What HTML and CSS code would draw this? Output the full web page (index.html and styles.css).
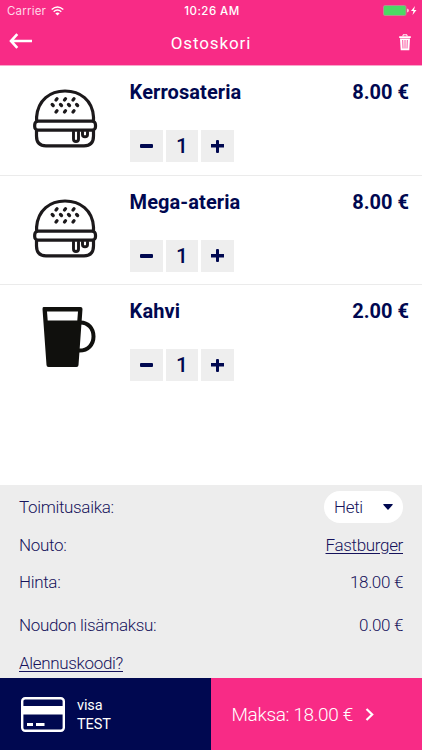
FILE: index.html
```html
<!DOCTYPE html>
<html lang="fi">
<head>
<meta charset="utf-8">
<title>Ostoskori</title>
<link rel="stylesheet" href="styles.css">
</head>
<body>
<svg class="defs" width="0" height="0" aria-hidden="true">
  <symbol id="burger" viewBox="0 0 66 60">
    <g fill="none" stroke="#1c191b" stroke-width="3.2" stroke-linecap="round" stroke-linejoin="round">
      <path d="M3.600 31V28C5 11 17 2 32 2S59.500 11 60.500 28V31"/>
      <rect x="1.700" y="32.200" width="60.800" height="9" rx="3.500"/>
      <path d="M3.500 42V47Q3.500 56.800 13 56.800H51Q60.500 56.800 60.500 47V42"/>
      <path stroke-width="2.900" d="M40.500 43V50Q40.500 52.500 43 52.500T45.500 50V43M49.500 43V45.500Q49.500 47.800 52 47.800T54.500 45.500V43"/>
    </g>
    <g stroke="#1c191b" stroke-width="3.300" stroke-linecap="round">
      <path d="M23 11l1-1.200M31.500 11l1-1.200M40 11l1-1.200M20.200 16.500l-1-1M28.500 16.500l-1-1M36.500 16.500l-1-1M44.600 16.500l-1-1M23 23l1-1.200M31.500 23l1-1.200M40 23l1-1.200"/>
    </g>
  </symbol>
</svg>
<main class="app">
  <header class="top">
    <div class="status">
      <div class="carrier">Carrier
        <svg width="13" height="10" viewBox="0 0 13 10"><g fill="none" stroke="#fff" stroke-width="1.400"><path d="M.7 3.600Q6.500-1.600 12.300 3.600M2.700 5.700Q6.500 2.300 10.300 5.700"/></g><path fill="#fff" d="M4.300 7.300Q6.500 5.500 8.700 7.300L6.500 9.500Z"/></svg>
      </div>
      <div class="time">10:26 AM</div>
      <svg class="battery" width="34" height="12" viewBox="0 0 34 12"><rect x=".5" y=".5" width="22.500" height="10" rx="1.500" fill="#4cd964" stroke="#b88c91"/><path fill="#fbc" d="M24 3.500q2 .3 2 2t-2 2z"/><path fill="#fff" d="M32 1l-4 5h2.500L29.500 10l4-5H31z"/></svg>
    </div>
    <nav class="bar">
      <svg class="back" width="24" height="16" viewBox="0 0 24 16"><path d="M8.300 1.200L2 8l6.300 6.800M2 8H23" fill="none" stroke="#fff" stroke-width="2.600"/></svg>
      <h1>Ostoskori</h1>
      <svg class="trash" width="12" height="17" viewBox="0 0 12 17"><path d="M4 2.300V.8H8V2.300" fill="none" stroke="#fff"/><path fill="#fff" d="M.2 2.200H11.800V4H.2zM1 4.500H11L10.300 16.300H1.700z"/><path d="M3.700 6l.3 8.500M6 6v8.500M8.300 6L8 14.500" stroke="#f82b86" stroke-width=".8"/></svg>
    </nav>
  </header>
  <section class="items">
    <article class="item">
      <svg class="burger" width="66" height="60"><use href="#burger"/></svg>
      <div class="details">
        <div class="line"><h2>Kerrosateria</h2><span>8.00 €</span></div>
        <div class="qty"><button class="minus"><i></i></button><b>1</b><button class="plus"><i></i></button></div>
      </div>
    </article>
    <article class="item">
      <svg class="burger" width="66" height="60"><use href="#burger"/></svg>
      <div class="details">
        <div class="line"><h2>Mega-ateria</h2><span>8.00 €</span></div>
        <div class="qty"><button class="minus"><i></i></button><b>1</b><button class="plus"><i></i></button></div>
      </div>
    </article>
    <article class="item">
      <svg class="mug" width="54" height="61" viewBox="0 0 54 61"><path fill="#10100d" fill-rule="evenodd" d="M1.500 0H38.500Q40.500 0 40.500 2L36.500 58Q36.500 60 34.500 60H6.500Q4.500 60 4.500 58L.5 2Q.5 0 1.500 0ZM5 4.500L5.700 13.500H35.300L36 4.500Z"/><path d="M37 15.500C56 14 57 45 36 43.500" fill="none" stroke="#10100d" stroke-width="4"/></svg>
      <div class="details">
        <div class="line"><h2>Kahvi</h2><span>2.00 €</span></div>
        <div class="qty"><button class="minus"><i></i></button><b>1</b><button class="plus"><i></i></button></div>
      </div>
    </article>
  </section>
  <section class="summary">
    <div class="row delivery"><span>Toimitusaika:</span><div class="select">Heti<svg width="10" height="6" viewBox="0 0 10 6"><path d="M.5 0H9.500Q10 .5 9.500 1L5.500 5.500Q5 6 4.500 5.500L.5 1Q0 .5.5 0Z" fill="#000850"/></svg></div></div>
    <div class="row pickup"><span>Nouto:</span><a>Fastburger</a></div>
    <div class="row price"><span>Hinta:</span><span>18.00 €</span></div>
    <div class="row fee"><span>Noudon lisämaksu:</span><span>0.00 €</span></div>
    <div class="row code"><a>Alennuskoodi?</a></div>
  </section>
  <footer class="actions">
    <div class="card">
      <svg width="44" height="35" viewBox="0 0 44 35"><rect x="1.200" y="1.200" width="41.600" height="32.600" rx="3" fill="none" stroke="#fff" stroke-width="2.400"/><path fill="#fff" d="M1 9H43V17.500H1zM6 26H12V29H6zM15 26H23.500V29H15z"/></svg>
      <div>visa<br>TEST</div>
    </div>
    <div class="pay"><span>Maksa: 18.00 €</span><svg width="9" height="13" viewBox="0 0 9 13"><path d="M1.500 1L7.200 6.500 1.500 12" fill="none" stroke="#fff" stroke-width="2.200"/></svg></div>
  </footer>
</main>
</body>
</html>
```
FILE: styles.css
```css
* { box-sizing: border-box; }
body { margin: 0; background: #fff; font-family: Roboto, "Liberation Sans", sans-serif; color: #000850; }
.defs { position: absolute; }
.app { width: 422px; height: 750px; display: flex; flex-direction: column; overflow: hidden; }
svg { display: block; flex: none; }

.top { height: 66px; background: #f82b86; color: #fff; border-bottom: 1px solid #f9a5ca; }
.status { height: 22px; padding: 0 5px 0 7px; display: grid; grid-template-columns: 1fr auto 1fr; align-items: center; font: 400 11.500px/22px Inter, sans-serif; }
.carrier { display: flex; align-items: center; gap: 5px; letter-spacing: .2px; color: #ffd7e8; }
.time { font-weight: 500; letter-spacing: .45px; }
.battery { justify-self: end; }
.bar { height: 43px; padding: 0 11px 0 9px; display: grid; grid-template-columns: 1fr auto 1fr; align-items: center; }
.bar h1 { margin: 0 -1px 0 1px; font-size: 17px; font-weight: 400; line-height: 43px; letter-spacing: .9px; }
.back { margin-top: -5px; }
.trash { justify-self: end; margin-top: -3px; }

.items { height: 419px; }
.item { height: 109.500px; border-bottom: 1px solid #ebebeb; display: flex; }
.item:last-child { border-bottom: 0; }
.burger { margin: 23px 0 0 33px; }
.mug { margin: 22px 3px 0 42px; }
.details { flex: 1; padding: 14px 13px 0 30.600px; }
.line { display: flex; justify-content: space-between; font-size: 20px; line-height: 24px; font-weight: 700; }
.line h2 { margin: 0; font-size: 20px; font-weight: 700; letter-spacing: .08px; }
.qty { display: flex; gap: 3px; margin-top: 26px; }
.qty button, .qty b { width: 33.300px; height: 32px; border: 0; padding: 0; background: #eee; display: flex; align-items: center; justify-content: center; }
.qty b { width: 32px; font-size: 21px; font-weight: 500; line-height: 34px; }
.minus i { display: block; width: 13px; height: 4px; background: #000850; border-radius: 1px; }
.plus i { display: block; width: 13px; height: 13px; background: linear-gradient(#000850, #000850) center / 13px 3.500px no-repeat; }
.plus i::after { content: ""; display: block; width: 3.500px; height: 13px; background: #000850; border-radius: 1px; margin: 0 auto; }

.summary { height: 193px; background: #ededed; padding: 3px 19px 0; font-size: 17px; font-weight: 300; letter-spacing: -.33px; color: #16135c; }
.row { display: flex; align-items: center; justify-content: space-between; }
.delivery { height: 37px; }
.pickup { height: 39px; }
.price { height: 36px; }
.fee { height: 49px; }
.code { height: 27px; }
.row a { text-decoration: underline; text-decoration-thickness: 1px; text-underline-offset: 2px; }
.select { width: 79px; height: 32px; border-radius: 16px; background: #fff; padding: 0 10px; display: flex; align-items: center; justify-content: space-between; }

.actions { height: 72px; display: flex; color: #fff; }
.card { width: 211px; background: #000850; display: flex; align-items: center; gap: 12.500px; padding-left: 20.500px; font-size: 14.500px; line-height: 19px; letter-spacing: -.1px; }
.card div { padding-top: 1px; }
.pay { flex: 1; background: #f82b86; display: flex; align-items: center; gap: 12px; padding: 1px 0 0 20.500px; font-size: 19px; font-weight: 300; letter-spacing: -.35px; }
```
